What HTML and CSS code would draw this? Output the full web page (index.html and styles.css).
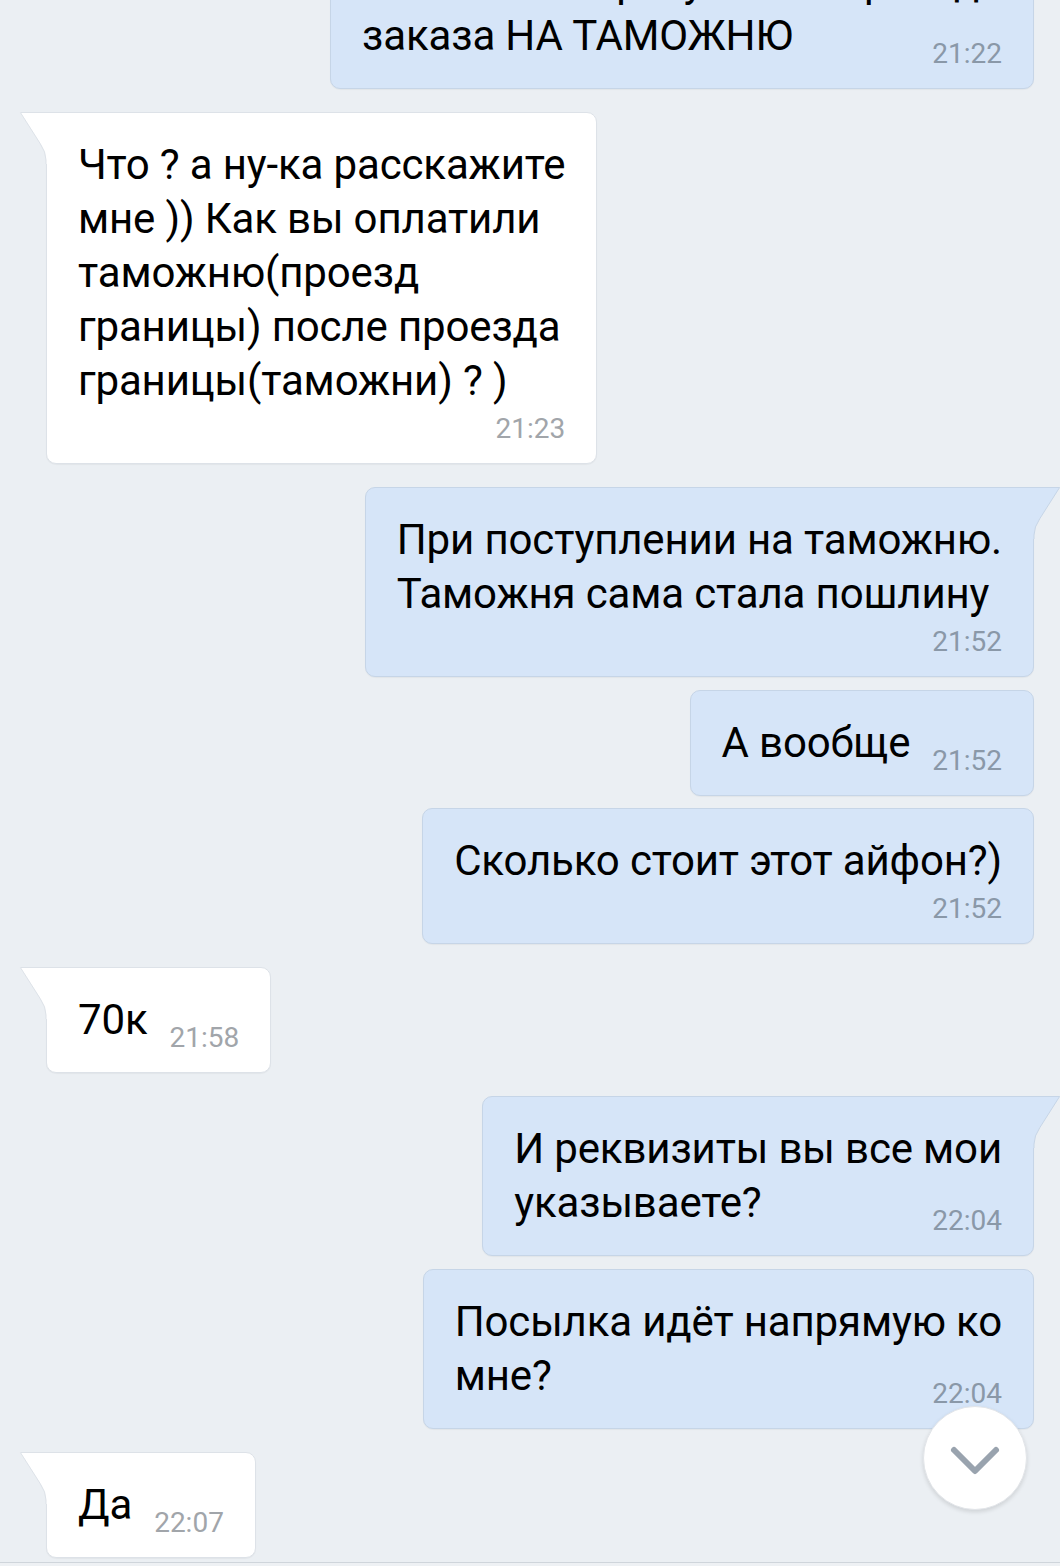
FILE: index.html
```html
<!DOCTYPE html>
<html lang="ru">
<head>
  <meta charset="UTF-8">
  <title>Диалог</title>
  <link rel="stylesheet" href="styles.css">
</head>
<body>
  <div class="chat">
    <div class="msg out">
      Оплатил её сразу после прихода<br>заказа НА ТАМОЖНЮ<span class="time side">21:22</span>
    </div>

    <div class="msg in first">
      <svg class="tail" width="29" height="52" viewBox="0 0 29 52"><path d="M29 0 H1 L21 31 Q27 40 27 48 V52 H29 Z" fill="#fff"/><path d="M29 0.5 H1.4 L21 31.3 Q27 40 27 48 V52" fill="none" stroke="#dde2e8"/></svg>
      Что ? а ну-ка расскажите<br>мне )) Как вы оплатили<br>таможню(проезд<br>границы) после проезда<br>границы(таможни) ? )
      <span class="time own">21:23</span>
    </div>

    <div class="msg out first">
      <svg class="tail" width="29" height="52" viewBox="0 0 29 52"><path d="M29 0 H1 L21 31 Q27 40 27 48 V52 H29 Z" fill="#d6e5f8"/><path d="M29 0.5 H1.4 L21 31.3 Q27 40 27 48 V52" fill="none" stroke="#c6d5e7"/></svg>
      При поступлении на таможню.<br>Таможня сама стала пошлину
      <span class="time own">21:52</span>
    </div>

    <div class="msg out">
      А вообще<span class="time side">21:52</span>
    </div>

    <div class="msg out">
      Сколько стоит этот айфон?)
      <span class="time own">21:52</span>
    </div>

    <div class="msg in first">
      <svg class="tail" width="29" height="52" viewBox="0 0 29 52"><path d="M29 0 H1 L21 31 Q27 40 27 48 V52 H29 Z" fill="#fff"/><path d="M29 0.5 H1.4 L21 31.3 Q27 40 27 48 V52" fill="none" stroke="#dde2e8"/></svg>
      70к<span class="time side">21:58</span>
    </div>

    <div class="msg out first">
      <svg class="tail" width="29" height="52" viewBox="0 0 29 52"><path d="M29 0 H1 L21 31 Q27 40 27 48 V52 H29 Z" fill="#d6e5f8"/><path d="M29 0.5 H1.4 L21 31.3 Q27 40 27 48 V52" fill="none" stroke="#c6d5e7"/></svg>
      И реквизиты вы все мои<br>указываете?<span class="time side">22:04</span>
    </div>

    <div class="msg out">
      Посылка идёт напрямую ко<br>мне?<span class="time side">22:04</span>
    </div>

    <div class="msg in first">
      <svg class="tail" width="29" height="52" viewBox="0 0 29 52"><path d="M29 0 H1 L21 31 Q27 40 27 48 V52 H29 Z" fill="#fff"/><path d="M29 0.5 H1.4 L21 31.3 Q27 40 27 48 V52" fill="none" stroke="#dde2e8"/></svg>
      Да<span class="time side">22:07</span>
    </div>
  </div>

  <div class="composer"></div>

  <button class="scroll-down" aria-label="Вниз">
    <svg width="52" height="32" viewBox="0 0 52 32"><path d="M5 5 L26 26 L47 5" fill="none" stroke="#99a3ae" stroke-width="6" stroke-linecap="round" stroke-linejoin="round"/></svg>
  </button>
</body>
</html>
```

FILE: styles.css
```css
:root {
  --bg: #ebeff3;
  --out-bg: #d6e5f8;
  --out-border: #c6d5e7;
  --in-border: #dde2e8;
  --out-time: #8a98a8;
  --in-time: #a1a5aa;
}
body {
  margin: 0;
  height: 1566px;
  overflow: hidden;
  position: relative;
  display: flex;
  flex-direction: column;
  background: var(--bg);
  font-family: Roboto, "Noto Sans", sans-serif;
  color: #000;
}
.chat {
  flex: 1;
  display: flex;
  flex-direction: column;
  margin-top: -71px;
  padding: 0 26px 0 46px;
}
.msg {
  position: relative;
  display: flow-root;
  padding: 25px 31px 16px;
  border-radius: 10px;
  font-size: 42px;
  line-height: 54px;
  letter-spacing: -0.15px;
  margin-top: 12.5px;
}
.msg.first {
  margin-top: 23px;
}
.msg:first-child {
  margin-top: 0;
}
.msg.in {
  align-self: flex-start;
  background: #fff;
  border: 1px solid var(--in-border);
  box-shadow: 0 1px 1px rgba(0, 0, 0, 0.04);
}
.msg.out {
  align-self: flex-end;
  background: var(--out-bg);
  border: 1px solid var(--out-border);
  box-shadow: 0 1px 1px rgba(0, 0, 0, 0.04);
}
.msg.in.first {
  border-top-left-radius: 0;
}
.msg.out.first {
  border-top-right-radius: 0;
}
.tail {
  position: absolute;
  top: -1px;
  display: block;
}
.in .tail {
  left: -28px;
}
.out .tail {
  right: -28px;
  transform: scaleX(-1);
}
.time {
  font-size: 28px;
  line-height: 36px;
  letter-spacing: 0;
}
.in .time {
  color: var(--in-time);
}
.out .time {
  color: var(--out-time);
}
.time.side {
  float: right;
  margin: 27px 0 0 22px;
}
.time.own {
  display: block;
  text-align: right;
  margin-top: 3px;
}
.composer {
  height: 3px;
  border-top: 1px solid #cfd5db;
  background: #eef1f4;
}
.scroll-down {
  position: absolute;
  left: 923px;
  top: 1406px;
  width: 104px;
  height: 104px;
  padding: 0;
  border: 1px solid #e2e5e9;
  border-radius: 50%;
  background: #fff;
  box-shadow: 0 2px 4px rgba(0, 0, 0, 0.12);
  display: flex;
  align-items: center;
  justify-content: center;
}
.scroll-down svg {
  margin-top: 6px;
}
```
